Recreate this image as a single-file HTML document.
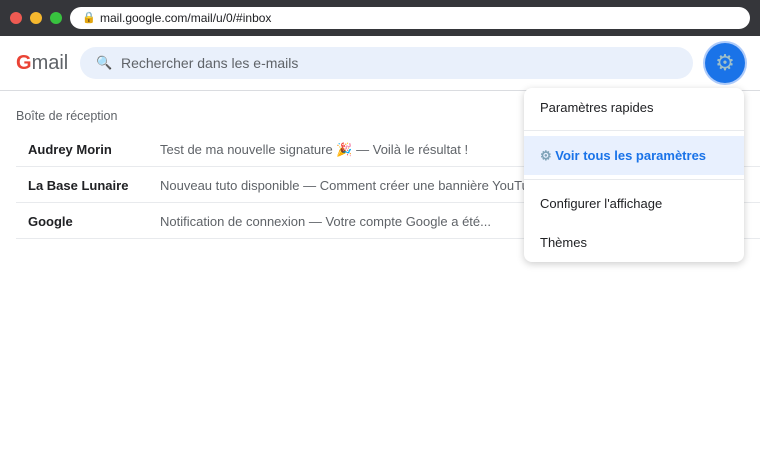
<!DOCTYPE html>
<html><head><meta charset="utf-8"><style>
*{margin:0;padding:0;box-sizing:border-box}
body{width:760px;height:450px;background:#fff;font-family:"Liberation Sans","Noto Sans CJK JP",sans-serif;position:relative;overflow:hidden;color:#202124}
.top{position:absolute;left:0;top:0;width:760px;height:36px;background:#35363a}
.dot{position:absolute;top:12px;width:12px;height:12px;border-radius:50%}
.url{position:absolute;left:70px;top:7px;width:680px;height:22px;background:#fff;border-radius:11px;font-size:12px;line-height:22px;padding-left:30px;color:#202124}
.hdr{position:absolute;left:0;top:36px;width:760px;height:55px;border-bottom:1px solid #dadce0}
.logo{position:absolute;left:16px;top:52px;font-size:20px;color:#5f6368}
.search{position:absolute;left:80px;top:47px;width:613px;height:32px;background:#e9f0fb;border-radius:16px;font-size:14px;line-height:32px;padding-left:41px;color:#5f6368}
.gear{position:absolute;left:705px;top:43px;width:40px;height:40px;border-radius:50%;background:#1a73e8;box-shadow:0 0 0 2px #aecbfa;text-align:center;line-height:40px;font-size:22px;color:#9fbfc8}
.lbl{position:absolute;left:16px;top:109px;font-size:12.5px;color:#5f6368}
.row{position:absolute;left:16px;width:744px;height:36px;border-bottom:1px solid #e8eaed;font-size:13px;line-height:38px}
.row b{position:absolute;left:12px}
.row span{position:absolute;left:144px;color:#5f6368;white-space:nowrap}
.menu{position:absolute;left:524px;top:88px;width:220px;height:174px;background:#fff;border-radius:8px;box-shadow:0 2px 8px rgba(0,0,0,.2)}
.it{position:absolute;left:16px;font-size:13px;color:#202124}
.hl{position:absolute;left:0;top:48px;width:220px;height:39px;background:#e8f0fe}
.dv{position:absolute;left:0;width:220px;height:1px;background:#e8eaed}
</style></head><body>
<div class="top">
<div class="dot" style="left:10px;background:#ee5a52"></div>
<div class="dot" style="left:30px;background:#f5b82e"></div>
<div class="dot" style="left:50px;background:#38c23f"></div>
<div class="url"><span style="position:absolute;left:12px;font-size:11px">🔒</span>mail.google.com/mail/u/0/#inbox</div>
</div>
<div class="hdr"></div>
<div class="logo"><span style="color:#ea4335;font-weight:bold">G</span>mail</div>
<div class="search"><span style="position:absolute;left:16px;font-size:13px">🔍</span>Rechercher dans les e-mails</div>
<div class="gear">⚙</div>
<div class="lbl">Boîte de réception</div>
<div class="row" style="top:131px"><b>Audrey Morin</b><span>Test de ma nouvelle signature 🎉 — Voilà le résultat !</span></div>
<div class="row" style="top:167px"><b>La Base Lunaire</b><span>Nouveau tuto disponible — Comment créer une bannière YouTube</span></div>
<div class="row" style="top:203px"><b>Google</b><span>Notification de connexion — Votre compte Google a été...</span></div>
<div class="menu">
<div class="it" style="top:12px">Paramètres rapides</div>
<div class="dv" style="top:42px"></div>
<div class="hl"></div>
<div class="it" style="top:60px;color:#1a73e8;font-weight:bold"><span style="color:#7fa3b8">⚙</span> Voir tous les paramètres</div>
<div class="dv" style="top:91px"></div>
<div class="it" style="top:108px">Configurer l'affichage</div>
<div class="it" style="top:147px">Thèmes</div>
</div>
</body></html>
